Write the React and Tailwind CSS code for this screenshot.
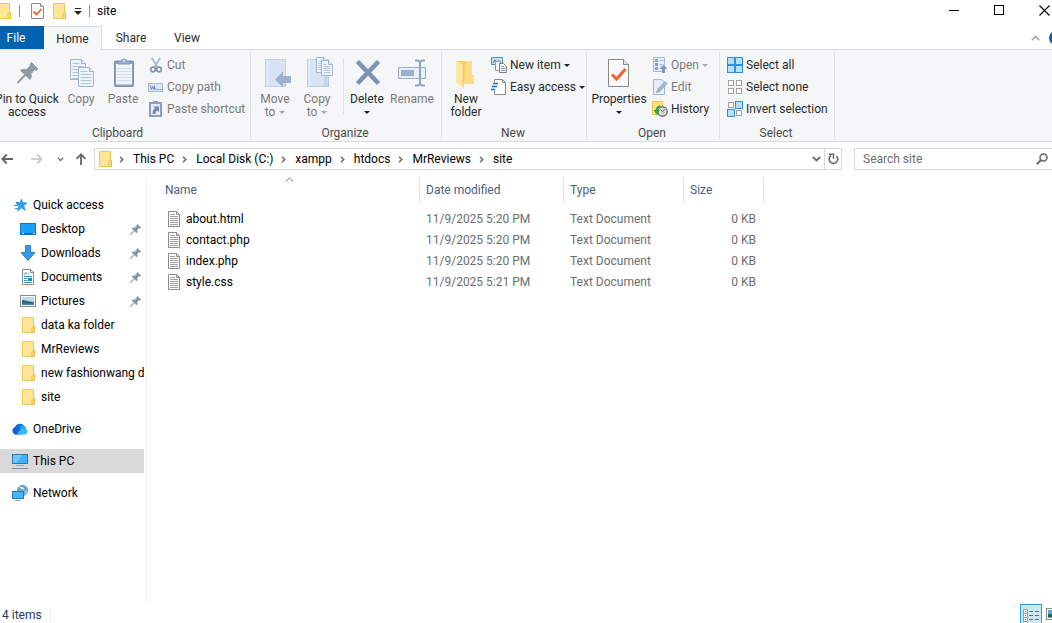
import React from "react";

/* ---------- icons ---------- */

const Svg = ({ w = 16, h = 16, children, className = "" }) => (
  <svg width={w} height={h} viewBox={`0 0 ${w} ${h}`} fill="none" aria-hidden="true" className={`shrink-0 ${className}`}>
    {children}
  </svg>
);

const FolderIcon = () => (
  <Svg w={14} h={16}>
    <path d="M1.500.5h11v9.500h1v5.500h-12z" fill="#ffe694" stroke="#edc951" />
    <path d="M11 15.500v-5l1-1h1.500v6z" fill="#ffe291" stroke="#e5bb3c" />
  </Svg>
);

const CheckDoc = () => (
  <Svg w={14} h={16}>
    <path d="M.5.5h9l3 3v12H.5z" fill="#fbfbfb" stroke="#8c8c8c" />
    <path d="M9.500.5v3h3" stroke="#8c8c8c" fill="#e4e4e4" />
    <path d="M2.500 8.500l3 3 5-5.500" stroke="#f0642a" strokeWidth="1.800" />
  </Svg>
);

const Caret = ({ color = "#222" }) => (
  <Svg w={6} h={3}>
    <path d="M0 0h6L3 3z" fill={color} />
  </Svg>
);

const Chevron = () => (
  <Svg w={5} h={7}>
    <path d="M1 .8L3.800 3.500 1 6.200" stroke="#6b6b6b" strokeWidth="1.500" />
  </Svg>
);

const PinPath = ({ fill }) => (
  <path
    d="M20.500 6.500L27 13l-2.200 1.200-1.300-.4-3.700 4c.9 2.300.6 4.200-.8 5.800l-4.300-4.200L8 26.500 6.500 27l.5-1.500 6.800-7-4.300-4c1.700-1.300 3.700-1.600 5.800-.9l4.200-3.800-.3-1.500z"
    fill={fill}
    stroke={fill}
    strokeWidth=".9"
  />
);

const PinBig = () => (
  <Svg w={32} h={32}>
    <PinPath fill="#8f9aa2" />
  </Svg>
);

const PinSmall = () => (
  <svg width="11" height="11" viewBox="6 6 21.500 21.500" aria-hidden="true" className="shrink-0">
    <PinPath fill="#87939d" />
  </svg>
);

const Page = ({ x, y, w, h, lines = 5, step = 2 }) => (
  <g>
    <path
      d={`M${x} ${y}h${w - 4}l4 4v${h - 4}h${-w}z`}
      fill="#eef4fc"
      stroke="#a3b4d0"
    />
    <path d={`M${x + w - 4} ${y}v4h4`} stroke="#a3b4d0" fill="#dfe8f5" />
    {Array.from({ length: lines }, (_, i) => (
      <path
        key={i}
        d={`M${x + 2} ${y + 4 + i * step}h${i < 1 ? w - 8 : w - 4}`}
        stroke="#b5c4de"
      />
    ))}
  </g>
);

const CopyBig = () => (
  <Svg w={32} h={32}>
    <Page x={5.5} y={3.5} w={15} h={20} lines={6} step={3} />
    <Page x={13.5} y={11.5} w={15} h={19} lines={5} step={3} />
  </Svg>
);

const PasteBig = () => (
  <Svg w={32} h={32}>
    <rect x="7.500" y="5" width="19" height="25.500" rx="1" fill="#8a9cbf" stroke="#7c90b6" />
    <rect x="9" y="8" width="16" height="20.500" fill="#eef4fc" />
    <path d="M10 12.500h14M10 15.500h14M10 18.500h14M10 21.500h14M10 24.500h14" stroke="#cfdaeb" />
    <path d="M11 8V5.500h3.500a2.500 2.500 0 015 0H23V8z" fill="#9eafcb" stroke="#8799bb" />
    <circle cx="17" cy="4.800" r="1" fill="#e5ecf6" />
  </Svg>
);

const PaleFolder = ({ w = 21 }) => (
  <g>
    <rect x="6.500" y="3.500" width={w - 1} height="27" fill="#d8e4f4" stroke="#c3d1e6" />
    <path d="M8.500 4v26" stroke="#e6eef9" />
    <path d={`M${w + 2} 30.500V21h3.500v9.500z`} fill="#cddbef" stroke="#b9c9e1" />
  </g>
);

const MoveBig = () => (
  <Svg w={32} h={32}>
    <PaleFolder w={21} />
    <path d="M16 23.500l8-8V20h8v7h-8v4.500z" fill="#9cafcc" />
  </Svg>
);

const CopyToBig = () => (
  <Svg w={32} h={32}>
    <PaleFolder w={22} />
    <Page x={15.5} y={1.5} w={11} h={15} lines={5} step={2} />
    <Page x={20.5} y={4.5} w={11} h={15} lines={5} step={2} />
  </Svg>
);

const DeleteBig = () => (
  <Svg w={32} h={32}>
    <path d="M6.500 5.500l21 22M27.500 5.500l-21 22" stroke="#7f92b4" strokeWidth="4.600" />
  </Svg>
);

const RenameBig = () => (
  <Svg w={32} h={32}>
    <rect x="2.500" y="11.500" width="27" height="11" fill="#e6effa" stroke="#9cafcc" />
    <rect x="5" y="14" width="13" height="6" fill="#9cafcc" />
    <path d="M19 4.500h3l2 1.500 2-1.500h3M19 29.500h3l2-1.500 2 1.500h3M24 6v22" stroke="#8fa2c3" strokeWidth="2" />
  </Svg>
);

const NewFolderBig = () => (
  <Svg w={32} h={32}>
    <path d="M6 5h16v14h2v9H12z" fill="#f7cf6b" />
    <path d="M16 5h6v14h2v9H14z" fill="#fbdc87" />
    <path d="M6 5l7 3.500v23.300L6 27z" fill="#ffe8a3" />
    <path d="M13 8.500v23" stroke="#f0c65c" />
  </Svg>
);

const PropertiesBig = () => (
  <Svg w={32} h={32}>
    <path d="M5.500 3.500h15l5 5v22h-20z" fill="#fafafa" stroke="#8a8a8a" />
    <path d="M20.500 3.500v5h5" fill="#e8e8e8" stroke="#8a8a8a" />
    <path d="M9 18.500l4.500 4.500 9-10" stroke="#f2622a" strokeWidth="3" />
  </Svg>
);

const CutIcon = () => (
  <Svg>
    <path d="M3.800 1l5.700 9M12.200 1L6.500 10" stroke="#a5b4cc" strokeWidth="1.600" />
    <circle cx="5" cy="12.500" r="2.300" stroke="#8496b8" strokeWidth="1.700" />
    <circle cx="11" cy="12.500" r="2.300" stroke="#8496b8" strokeWidth="1.700" />
  </Svg>
);

const CopyPathIcon = () => (
  <Svg>
    <rect x=".5" y="4.500" width="14" height="8" fill="#dae6f6" stroke="#a9b9d4" />
    <path d="M2 6.500l1.500 4 1-3 1.500 3 .5-4M6 7l1.500 3.500" stroke="#6e83aa" />
    <path d="M8.500 10.500h1M10.500 10.500h1M12.500 10.500h1" stroke="#6e83aa" />
  </Svg>
);

const PasteShortcutIcon = () => (
  <Svg>
    <rect x="2" y="2" width="11" height="13" fill="#e6eefa" stroke="#8b9dc0" strokeWidth="2" />
    <rect x="5" y="0" width="5" height="3" fill="#8b9dc0" />
    <path d="M4.500 13c0-3 1-5 2.500-5.500L5.500 5.500H11V11L9.500 9.500C8 10 7.500 11 7.500 13z" fill="#7387ae" />
  </Svg>
);

const NewItemIcon = () => (
  <Svg>
    <rect x=".5" y=".5" width="11" height="7" fill="#bfe0f2" stroke="#5b96b8" />
    <path d="M2 6l2-3 2 2 1.500-1.500" stroke="#3c7ba0" />
    <path d="M4.500 4.500h5v9h-5z" fill="#f6f9fb" stroke="#8c9aa4" />
    <path d="M8.500 6.500h4l3 3v6h-7z" fill="#fff" stroke="#7d7d7d" />
    <path d="M10 9.500h3M10 11.500h4M10 13.500h4" stroke="#6ea7cf" />
  </Svg>
);

const EasyAccessIcon = () => (
  <Svg>
    <path d="M3.500.5h8l3 3v12h-11z" fill="#fff" stroke="#8a8a8a" />
    <path d="M11.500.5v3h3" stroke="#8a8a8a" />
    <path d="M1 4.500h6M0 7.500h5M0 10.500h4" stroke="#f4f6f8" strokeWidth="3" />
    <path d="M2 4.500h5M1 7.500h5M0 10.500h4" stroke="#1a6fb5" strokeWidth="1.500" />
  </Svg>
);

const OpenIcon = () => (
  <Svg>
    <path d="M1.500.5h11v14h-11z" fill="#e3ecf8" stroke="#a9b8d2" />
    <path d="M3 2h3v3H3zM3 6h3v3H3zM3 10h3v3H3z" fill="#8fa2c3" />
    <path d="M7.500 3.500h4M7.500 7.500h3" stroke="#a9b8d2" />
    <path d="M10 16v-4H7.500l4-4.500 4 4.500H13v4z" fill="#8497ba" />
  </Svg>
);

const EditIcon = () => (
  <Svg>
    <path d="M1.500.5h8l3 3v12h-11z" fill="#e6eefa" stroke="#a3b4d0" />
    <path d="M4.500 13.500l1-3L13 2.500l2 2-7.500 8z" fill="#a5b6d3" stroke="#94a7c8" />
  </Svg>
);

const HistoryIcon = () => (
  <Svg>
    <rect x=".5" y=".5" width="10" height="13" fill="#ffe182" stroke="#eac451" />
    <circle cx="10.500" cy="10.500" r="4.700" fill="#dcdcdc" stroke="#757575" strokeWidth="1.400" />
    <path d="M8.500 8.500l2 2 2.500-2.500M10.500 10.500l1.500 1" stroke="#777" />
    <path d="M8.500 4.500C5.500 4.500 3.500 6.500 3.500 9H1.500l3.500 5 3-5H6c0-1.500.8-2.500 2.500-3z" fill="#35ad36" />
  </Svg>
);

const Quad = ({ on }) => {
  const spots = [[0, 0], [8, 0], [0, 8], [8, 8]];
  return (
    <Svg>
      {spots.map(([x, y], i) =>
        on[i] ? (
          <rect key={i} x={x + 0.5} y={y + 0.5} width="7" height="7" fill="#b5dffc" stroke="#2e90de" />
        ) : (
          <rect key={i} x={x + 1.5} y={y + 1.5} width="5" height="5" fill="#fff" stroke="#a3a3a3" />
        )
      )}
    </Svg>
  );
};

const TextFileIcon = () => (
  <Svg w={12} h={16}>
    <path d="M.5.5h8l3 3v12H.5z" fill="#fff" stroke="#8b8b8b" />
    <path d="M8.500.5v3h3" stroke="#8b8b8b" />
    <path d="M2 3.500h5M2 5.500h8M2 7.500h8M2 9.500h8M2 11.500h8M2 13.500h8" stroke="#a2a2a2" />
  </Svg>
);

const StarIcon = () => (
  <Svg>
    <path d="M9.500 2l1.400 3.800h4L11.800 8.700l1.500 4.800-3.700-2.600-4.100 3.100 1.300-5L4 6.300l3.900-.6z" fill="#2ba3ec" stroke="#1c86cf" strokeWidth=".6" />
    <path d="M4 5.500h3M2 8.500h4M3 11.500h3" stroke="#2b97df" />
  </Svg>
);

const DesktopIcon = () => (
  <Svg>
    <rect x=".5" y="2.500" width="15" height="11" fill="#1aa0fb" stroke="#1273bd" />
    <path d="M0 12.500h16" stroke="#0e609f" />
    <path d="M2 12.500h2M13 12.500h2" stroke="#bfe2fb" />
  </Svg>
);

const DownloadIcon = () => (
  <Svg>
    <path d="M5.500.5h5v7h4.500l-7 8-7-8h4.500z" fill="#3a98e6" stroke="#2a7fcb" />
  </Svg>
);

const DocumentsIcon = () => (
  <Svg>
    <path d="M2.500.5h8l3 3v12h-11z" fill="#fff" stroke="#8b8b8b" />
    <path d="M10.500.5v3h3" stroke="#8b8b8b" />
    <path d="M4 5.500l2-2v2M8 4.500h1M4 7.500h8M4 9.500h3M4 11.500h3M4 13.500h8" stroke="#3b93c8" />
    <rect x="8" y="9" width="4" height="3" fill="#4478a0" />
  </Svg>
);

const PicturesIcon = () => (
  <Svg>
    <rect x=".5" y="2.500" width="15" height="11" fill="#fff" stroke="#8b8b8b" />
    <rect x="2" y="4" width="12" height="8" fill="#b5dcf4" />
    <path d="M2 7c3 0 6 1.500 12 2v2H2z" fill="#336b70" />
    <path d="M2 10.500h12V12H2z" fill="#3f86ba" />
  </Svg>
);

const OneDriveIcon = () => (
  <Svg>
    <path d="M4 13.500A3.800 3.800 0 013 6.200 5 5 0 0112 5L8 13.500z" fill="#0f6fd6" />
    <path d="M5 10c1-3.500 4-6.500 7-5.300 1.500.6 2 1.800 2 3.300l-4 5.500H6z" fill="#1c9bf0" />
    <path d="M5 13.500c1-3.500 3.500-6.500 7.500-6.300a3.200 3.200 0 01.5 6.300z" fill="#3fbcf8" />
    <path d="M4 13.500A3.800 3.800 0 013 6.200c2.500 0 5 1.300 6 2.300-2 1.200-3 3-4 5z" fill="#1b5fd0" />
  </Svg>
);

const ThisPCIcon = () => (
  <Svg>
    <rect x=".5" y="1.500" width="15" height="9" fill="#3cb4fa" stroke="#2f78a8" />
    <path d="M1 2h9l-5 8H1z" fill="#68c8ff" />
    <path d="M4 12.500h8" stroke="#8fa9bd" />
    <path d="M0 15.500h16" stroke="#7f93b0" />
  </Svg>
);

const NetworkIcon = () => (
  <Svg>
    <circle cx="10.500" cy="5.500" r="5" fill="#6fa9ca" stroke="#4f87a7" />
    <path d="M7.500 2.500c1.500-1 2.500 1.500 4.500 1" stroke="#d6ebf5" strokeWidth="1.800" />
    <path d="M13 6l1.500 1-1 2" stroke="#b9dbea" strokeWidth="1.300" />
    <rect x=".5" y="6.500" width="11" height="7" fill="#40b5f8" stroke="#2f78a8" />
    <path d="M3 15.500h6" stroke="#8fa9bd" />
  </Svg>
);

const Arrow = ({ dir, color }) => (
  <Svg w={12} h={12} className={dir === "right" ? "rotate-180" : dir === "up" ? "rotate-90" : ""}>
    <path d="M12 6H1.500M5.800 1.500L1.300 6l4.500 4.500" stroke={color} strokeWidth="1.800" />
  </Svg>
);

/* ---------- ribbon ---------- */

const BigButton = ({ icon, lines, width = "w-[42px]", disabled, caret, inlineCaret }) => (
  <button
    type="button"
    disabled={disabled}
    className={`flex shrink-0 flex-col items-center pt-1.5 leading-[13px] whitespace-nowrap ${width} ${disabled ? "text-[#7b7b7b]" : "text-[#2b2b2b]"}`}
  >
    {icon}
    <span className="mt-[5px]">{lines[0]}</span>
    {lines[1] && (
      <span className="flex items-center gap-1">
        {lines[1]}
        {inlineCaret && <Caret color="#a9a9a9" />}
      </span>
    )}
    {caret && (
      <span className="flex h-3 items-center">
        <Caret />
      </span>
    )}
  </button>
);

const SmallButton = ({ icon, label, disabled, caret }) => (
  <button
    type="button"
    disabled={disabled}
    className={`flex h-[22px] items-center gap-[3px] px-1 whitespace-nowrap ${disabled ? "text-[#7b7b7b]" : "text-[#2b2b2b]"}`}
  >
    {icon}
    <span>{label}</span>
    {caret && <Caret color={disabled ? "#a9a9a9" : "#222"} />}
  </button>
);

const Stack = ({ children }) => <div className="flex flex-col items-start pt-1">{children}</div>;

const Group = ({ title, width, pad = "pl-[3px]", children }) => (
  <section aria-label={title} className={`my-0.5 flex shrink-0 flex-col border-r border-[#e0e2e4] ${width}`}>
    <div className={`-mt-0.5 flex h-[75px] ${pad}`}>{children}</div>
    <div className="h-3 pr-0.5 text-center leading-4 text-[#4a4a4a]">{title}</div>
  </section>
);

const Ribbon = () => (
  <div className="flex h-[92px] shrink-0 overflow-hidden border-b border-[#dadbdc] bg-[#f5f6f7]">
    <div className="-ml-[13px] flex">
      <Group title="Clipboard" width="w-[264px]" pad="pl-[7px]">
        <BigButton icon={<PinBig />} lines={["Pin to Quick", "access"]} width="w-[66px]" />
        <BigButton icon={<CopyBig />} lines={["Copy"]} disabled />
        <BigButton icon={<PasteBig />} lines={["Paste"]} disabled />
        <Stack>
          <SmallButton icon={<CutIcon />} label="Cut" disabled />
          <SmallButton icon={<CopyPathIcon />} label="Copy path" disabled />
          <SmallButton icon={<PasteShortcutIcon />} label="Paste shortcut" disabled />
        </Stack>
      </Group>
      <Group title="Organize" width="w-[191px]">
        <BigButton icon={<MoveBig />} lines={["Move", "to"]} disabled inlineCaret />
        <BigButton icon={<CopyToBig />} lines={["Copy", "to"]} disabled inlineCaret />
        <div className="mt-2 mr-0.5 ml-[5px] h-14 w-px shrink-0 bg-[#e0e2e4]" />
        <BigButton icon={<DeleteBig />} lines={["Delete"]} caret />
        <BigButton icon={<RenameBig />} lines={["Rename"]} width="w-12" disabled />
      </Group>
      <Group title="New" width="w-[145px]">
        <BigButton icon={<NewFolderBig />} lines={["New", "folder"]} />
        <Stack>
          <SmallButton icon={<NewItemIcon />} label="New item" caret />
          <SmallButton icon={<EasyAccessIcon />} label="Easy access" caret />
        </Stack>
      </Group>
      <Group title="Open" width="w-[133px]">
        <BigButton icon={<PropertiesBig />} lines={["Properties"]} width="w-[58px]" caret />
        <Stack>
          <SmallButton icon={<OpenIcon />} label="Open" disabled caret />
          <SmallButton icon={<EditIcon />} label="Edit" disabled />
          <SmallButton icon={<HistoryIcon />} label="History" />
        </Stack>
      </Group>
      <Group title="Select" width="w-[115px]">
        <Stack>
          <SmallButton icon={<Quad on={[1, 1, 1, 1]} />} label="Select all" />
          <SmallButton icon={<Quad on={[0, 0, 0, 0]} />} label="Select none" />
          <SmallButton icon={<Quad on={[0, 1, 1, 0]} />} label="Invert selection" />
        </Stack>
      </Group>
    </div>
  </div>
);

/* ---------- chrome ---------- */

const TitleBar = () => (
  <header className="flex h-[26px] shrink-0 items-start justify-between">
    <div className="-ml-[3px] flex h-[22px] items-center">
      <FolderIcon />
      <span className="ml-2 h-3 w-px bg-[#8c8c8c]" />
      <button type="button" aria-label="Properties" className="ml-[11px]">
        <CheckDoc />
      </button>
      <button type="button" aria-label="New folder" className="ml-[7px]">
        <FolderIcon />
      </button>
      <button type="button" aria-label="Customize toolbar" className="ml-2">
        <Svg w={8} h={7}>
          <path d="M1 .5h6" stroke="#222" />
          <path d="M0 3h8L4 7z" fill="#222" />
        </Svg>
      </button>
      <span className="ml-[7px] h-3 w-px bg-[#8c8c8c]" />
      <h1 className="ml-[7px]">site</h1>
    </div>
    <div className="-mr-[15px] flex">
      <button type="button" aria-label="Minimize" className="flex h-5 w-[45px] items-center justify-center">
        <Svg w={11} h={11}><path d="M0 5.500h10" stroke="#000" /></Svg>
      </button>
      <button type="button" aria-label="Maximize" className="flex h-5 w-[45px] items-center justify-center">
        <Svg w={11} h={11}><rect x=".5" y=".5" width="9" height="9" stroke="#000" /></Svg>
      </button>
      <button type="button" aria-label="Close" className="flex h-5 w-[45px] items-center justify-center">
        <Svg w={11} h={11}><path d="M.5.5l10 10M10.500.5l-10 10" stroke="#000" strokeWidth="1.100" /></Svg>
      </button>
    </div>
  </header>
);

const Tabs = () => (
  <nav className="flex h-6 shrink-0 border-b border-[#dadbdc] text-[#2b2b2b]">
    <button type="button" className="w-11 bg-[#0063b1] pr-3 text-white">File</button>
    <button type="button" className="-mb-px w-[58px] border-t border-r border-[#dadbdc] bg-[#f5f6f7]">Home</button>
    <button type="button" className="w-[58px]">Share</button>
    <button type="button" className="w-[54px]">View</button>
    <div className="-mr-[11px] ml-auto flex items-center gap-[9px]">
      <button type="button" aria-label="Collapse ribbon">
        <Svg w={9} h={6}><path d="M.8 5.200l3.700-4 3.700 4" stroke="#9a9a9a" strokeWidth="1.300" /></Svg>
      </button>
      <button type="button" aria-label="Help" className="size-3.5 rounded-full bg-[#0063b1]" />
    </div>
  </nav>
);

const crumbs = ["This PC", "Local Disk (C:)", "xampp", "htdocs", "MrReviews", "site"];

const AddressRow = () => (
  <div className="flex h-[34px] shrink-0 items-center">
    <div className="flex items-center pl-px">
      <button type="button" aria-label="Back"><Arrow dir="left" color="#666" /></button>
      <button type="button" aria-label="Forward" className="ml-[18px]" disabled><Arrow dir="right" color="#cfcfcf" /></button>
      <button type="button" aria-label="Recent locations" className="ml-3.5">
        <Svg w={7} h={5}><path d="M.8.8l2.700 2.700L6.200.8" stroke="#777" strokeWidth="1.300" /></Svg>
      </button>
      <button type="button" aria-label="Up" className="ml-[11px]"><Arrow dir="up" color="#666" /></button>
    </div>
    <div className="ml-[7px] flex h-[22px] min-w-0 flex-1 items-center border border-[#d9d9d9] pl-[3px]">
      <FolderIcon />
      <ol className="-ml-px flex min-w-0 flex-1 items-center overflow-hidden">
        {crumbs.map((c) => (
          <li key={c} className="flex items-center">
            <span className="ml-2 flex w-3.5 items-center"><Chevron /></span>
            <a href="#" className="whitespace-nowrap text-black">{c}</a>
          </li>
        ))}
      </ol>
      <button type="button" aria-label="Previous locations" className="px-[3px]">
        <Svg w={9} h={6}><path d="M.8.8l3.700 3.700L8.200.8" stroke="#666" strokeWidth="1.800" /></Svg>
      </button>
      <button type="button" aria-label="Refresh" className="flex h-full w-[17px] items-center justify-center border-l border-[#d9d9d9]">
        <Svg w={11} h={12}>
          <path d="M3 2.500a4.300 4.300 0 105.500.5" stroke="#666" strokeWidth="1.600" />
          <path d="M1 1.200h4.500v4.500" stroke="#666" strokeWidth="1.500" />
        </Svg>
      </button>
    </div>
    <label className="ml-3 flex h-[22px] w-[198px] items-center border border-r-0 border-[#d9d9d9] pr-1 pl-2">
      <input type="text" aria-label="Search site" placeholder="Search site" className="min-w-0 flex-1 outline-none placeholder:text-[#6d6d6d]" />
      <Svg w={12} h={12}>
        <circle cx="7.500" cy="4.500" r="3.500" stroke="#666" strokeWidth="1.500" />
        <path d="M5 7L.8 11.200" stroke="#666" strokeWidth="2" />
      </Svg>
    </label>
  </div>
);

/* ---------- body ---------- */

const NavItem = ({ icon, label, nested, pinned, selected }) => (
  <a
    href="#"
    aria-current={selected ? "true" : undefined}
    className={`flex h-6 items-center overflow-hidden whitespace-nowrap text-black ${nested ? "pl-5" : "pl-3"} ${selected ? "bg-[#d9d9d9]" : ""}`}
  >
    <span className="mr-[5px] flex w-4 shrink-0 justify-center">{icon}</span>
    <span>{label}</span>
    {pinned && <span className="mr-[3px] ml-auto"><PinSmall /></span>}
  </a>
);

const Sidebar = () => (
  <aside className="flex w-[147px] shrink-0 flex-col gap-2 border-r border-[#f0f0f0] pt-4 pr-0.5">
    <div>
      <NavItem icon={<StarIcon />} label="Quick access" />
      <NavItem icon={<DesktopIcon />} label="Desktop" nested pinned />
      <NavItem icon={<DownloadIcon />} label="Downloads" nested pinned />
      <NavItem icon={<DocumentsIcon />} label="Documents" nested pinned />
      <NavItem icon={<PicturesIcon />} label="Pictures" nested pinned />
      <NavItem icon={<FolderIcon />} label="data ka folder" nested />
      <NavItem icon={<FolderIcon />} label="MrReviews" nested />
      <NavItem icon={<FolderIcon />} label="new fashionwang d" nested />
      <NavItem icon={<FolderIcon />} label="site" nested />
    </div>
    <NavItem icon={<OneDriveIcon />} label="OneDrive" />
    <NavItem icon={<ThisPCIcon />} label="This PC" selected />
    <NavItem icon={<NetworkIcon />} label="Network" />
  </aside>
);

const files = [
  { name: "about.html", date: "11/9/2025 5:20 PM" },
  { name: "contact.php", date: "11/9/2025 5:20 PM" },
  { name: "index.php", date: "11/9/2025 5:20 PM" },
  { name: "style.css", date: "11/9/2025 5:21 PM" },
];

const FileTable = () => (
  <table className="w-[617px] table-fixed border-separate border-spacing-0 self-start">
    <colgroup>
      <col className="w-[273px]" />
      <col className="w-36" />
      <col className="w-[120px]" />
      <col className="w-20" />
    </colgroup>
    <thead>
      <tr className="h-[26px] text-left text-[#4c607a] [&>th]:border-r [&>th]:border-[#e5e5e5] [&>th]:p-0 [&>th]:font-normal">
        <th scope="col" aria-sort="ascending" className="relative">
          <span className="pl-[18px]">Name</span>
          <Svg w={9} h={5} className="absolute top-0 left-[138px]">
            <path d="M.8 4.500l3.700-3.500 3.700 3.500" stroke="#777" />
          </Svg>
        </th>
        <th scope="col"><span className="pl-1.5">Date modified</span></th>
        <th scope="col"><span className="pl-1.5">Type</span></th>
        <th scope="col"><span className="pl-1.5">Size</span></th>
      </tr>
    </thead>
    <tbody className="text-[#6d6d6d] before:block before:h-[5px] before:content-['']">
      {files.map((f) => (
        <tr key={f.name} className="h-[21px] [&>td]:p-0">
          <td>
            <span className="flex items-center gap-1.5 pl-[21px] text-black">
              <TextFileIcon />
              {f.name}
            </span>
          </td>
          <td><span className="pl-1.5">{f.date}</span></td>
          <td><span className="pl-1.5">Text Document</span></td>
          <td className="text-right"><span className="pr-2">0 KB</span></td>
        </tr>
      ))}
    </tbody>
  </table>
);

const StatusBar = () => (
  <footer className="flex h-5 shrink-0 items-stretch justify-between overflow-hidden">
    <div className="flex items-end pl-0.5 text-[#1e395b]">
      <span className="border-r border-[#f0f0f0] pr-2 leading-4">4 items</span>
    </div>
    <div className="-mr-[10px] flex items-start">
      <button type="button" aria-label="Details view" className="mt-px flex h-[22px] w-[22px] items-center justify-center border border-[#26a0da] bg-[#cbe8f6]">
        <Svg w={16} h={14}>
          <path d="M.5 1.500h4v4h-4zM.5 5.500h4v4h-4zM.5 9.500h4v4h-4z" fill="#fff" stroke="#9a9a9a" />
          <path d="M2 3h1v1H2z" fill="#3a7d3a" />
          <path d="M2 7h1v1H2z" fill="#3a78c0" />
          <path d="M2 11h1v1H2z" fill="#c03030" />
          <path d="M6 3.500h4M12 3.500h4M6 7.500h4M12 7.500h4M6 11.500h4M12 11.500h4" stroke="#5f6f7a" />
        </Svg>
      </button>
      <button type="button" aria-label="Large icons view" className="mt-[5px] ml-1">
        <Svg w={16} h={12}>
          <rect x=".5" y=".5" width="14" height="11" fill="#fff" stroke="#8b8b8b" />
          <rect x="2" y="2" width="11" height="8" fill="#5ea5dd" />
          <path d="M2 6h11v3H2z" fill="#2f5f52" />
        </Svg>
      </button>
    </div>
  </footer>
);

export default function App() {
  return (
    <div className="flex h-screen flex-col overflow-hidden bg-white font-[Roboto,'Open_Sans',sans-serif] text-[12px] leading-4 text-black">
      <TitleBar />
      <Tabs />
      <Ribbon />
      <AddressRow />
      <main className="flex min-h-0 flex-1 pt-px">
        <Sidebar />
        <FileTable />
      </main>
      <StatusBar />
    </div>
  );
}
